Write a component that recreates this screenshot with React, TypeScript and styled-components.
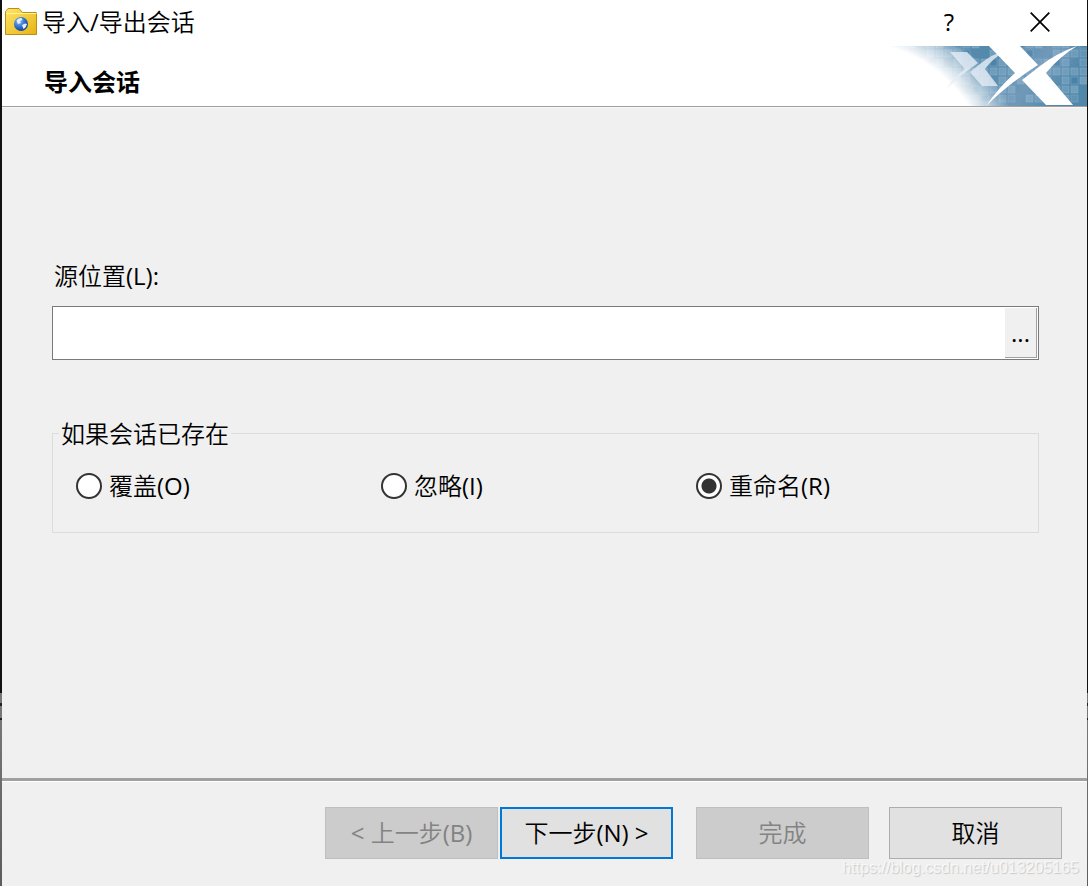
import React, { useState } from "react";
import styled, { createGlobalStyle, css } from "styled-components";

const GlobalStyle = createGlobalStyle`
  * { box-sizing: border-box; }
  body {
    margin: 0;
    color: #000;
    font: 24px/32px "Open Sans", "Noto Sans CJK SC DemiLight", "Noto Sans CJK SC", sans-serif;
  }
  button, input { font: inherit; color: inherit; }
`;

const Backdrop = styled.div`
  display: flex;
  min-height: 100vh;
  padding: 0 1px 0 2px;
  background: linear-gradient(
    #111 78.2%, #777 78.2%, #777 79.4%, #222 79.4%, #222 79.7%, #777 79.7%,
    #777 81%, #222 81%, #222 81.3%, #777 81.3%, #5c5c5c 100%
  );
`;

const Dialog = styled.main`
  display: flex;
  flex: 1;
  flex-direction: column;
  min-width: 0;
  background: #f0f0f0;
`;

const TitleBar = styled.header`
  display: flex;
  align-items: center;
  height: 46px;
  padding: 0 19px 2px 3px;
  background: #fff;
`;

const Title = styled.h1`
  flex: 1;
  margin: 0 0 0 5px;
  font-size: 24px;
  font-weight: 400;
`;

const CaptionButton = styled.button`
  display: flex;
  align-items: center;
  justify-content: center;
  width: 56px;
  height: 44px;
  margin-left: 35px;
  padding: 0;
  border: 0;
  background: none;
`;

const PageHeader = styled.div`
  display: flex;
  align-items: center;
  justify-content: space-between;
  height: 62px;
  padding-left: 42px;
  background: #fff;
  border-bottom: 1px solid #f8f8f8;
  box-shadow: inset 0 -1px #a0a0a0;
`;

const PageTitle = styled.h2`
  margin: 10px 0 0;
  font-family: "Open Sans", "Noto Sans CJK SC", sans-serif;
  font-size: 24px;
  font-weight: 700;
`;

const Banner = styled.svg`
  align-self: flex-start;
  width: 200px;
  height: 60px;
`;

const Content = styled.form`
  display: flex;
  flex: 1;
  flex-direction: column;
  padding: 152px 48px 32px 50px;
`;

const FieldLabel = styled.label`
  margin-left: 2px;
`;

const PathField = styled.div`
  display: flex;
  height: 54px;
  margin: 14px 0 56px;
  padding: 1px;
  background: #fff;
  border: 1px solid #7a7a7a;
`;

const PathInput = styled.input`
  flex: 1;
  min-width: 0;
  padding: 0 8px;
  border: 0;
  outline: 0;
  background: transparent;
`;

const BrowseButton = styled.button`
  width: 32px;
  padding: 0;
  border: 0;
  border-right: 1px solid #a0a0a0;
  border-bottom: 1px solid #a0a0a0;
  background: #f0f0f0;
`;

const Group = styled.fieldset`
  min-width: 0;
  margin: 0;
  padding: 20px 0 30px 6px;
  border: 1px solid #dcdcdc;
`;

const GroupTitle = styled.legend`
  padding: 2px 2px 0;
`;

const Options = styled.div`
  display: grid;
  grid-template-columns: 305fr 315fr 342fr;
  padding-left: 17px;
`;

const Option = styled.label`
  display: flex;
  align-items: center;
  gap: 7px;
`;

const Radio = styled.input`
  flex: none;
  appearance: none;
  width: 26px;
  height: 26px;
  margin: 0;
  border: 2px solid #333;
  border-radius: 50%;
  background: #fff;

  &:checked {
    background: radial-gradient(circle, #333 7px, #fff 8px);
  }
`;

const Footer = styled.footer`
  position: relative;
  display: flex;
  justify-content: flex-end;
  height: 108px;
  padding: 25px 25px 0 0;
  border-top: 3px solid #a0a0a0;
  box-shadow: inset 0 1px #fff;
`;

const ActionButton = styled.button<{ $primary?: boolean; $gap: number }>`
  width: 173px;
  height: 52px;
  margin: 1px 0 0 ${(p) => p.$gap}px;
  padding: 0;
  border: 1px solid #adadad;
  background: #e1e1e1;
  white-space: nowrap;

  ${(p) => p.$primary && css`border: 2px solid #0078d7;`}

  &:disabled {
    color: #838383;
    background: #ccc;
    border-color: #bfbfbf;
  }
`;

const Watermark = styled.span`
  position: absolute;
  right: 8px;
  bottom: 8px;
  color: rgba(255, 255, 255, 0.7);
  font: 16px/20px "Liberation Sans", sans-serif;
  text-shadow: 1px 1px 1px rgba(0, 0, 0, 0.16);
  pointer-events: none;
`;

function FolderIcon() {
  return (
    <svg width="32" height="28" viewBox="0 0 32 28" aria-hidden="true">
      <defs>
        <linearGradient id="folder" x1="0" y1="0" x2="1" y2="1">
          <stop offset="0" stopColor="#ffe565" />
          <stop offset="1" stopColor="#e6b416" />
        </linearGradient>
        <radialGradient id="globe" cx="0.35" cy="0.3" r="0.75">
          <stop offset="0" stopColor="#8dbdf5" />
          <stop offset="0.6" stopColor="#2c6cc8" />
          <stop offset="1" stopColor="#143f91" />
        </radialGradient>
      </defs>
      <path d="M.5 26.500V3.500L3 .5h11l3.500 4h14v22z" fill="url(#folder)" stroke="#b98e12" />
      <path d="M1.500 5.500h30" stroke="#fff2a0" />
      <circle cx="16" cy="16" r="7" fill="url(#globe)" />
      <path d="M11.500 12.500q2-3 5-2.500l1 2-2.500 1 1 2-3 1zM17 17l3-1.500 2 .5-1.500 3.500-2 1.500z" fill="#e2f0ff" />
    </svg>
  );
}

// Cells of the banner's mosaic, each with its own shade
const tiles = Array.from({ length: 24 * 7 }, (_, i) => {
  const col = i % 24;
  const row = Math.floor(i / 24);
  return { col, row, tone: (col * 37 + row * 53 + col * row * 11) % 7 };
}).filter((t) => t.tone > 1);

function BrandBanner() {
  return (
    <Banner viewBox="0 0 200 60" preserveAspectRatio="none" aria-hidden="true">
      <defs>
        <linearGradient id="sky" x1="0" y1="0" x2="1" y2="0.2">
          <stop offset="0" stopColor="#5c8db2" />
          <stop offset="0.55" stopColor="#5389ab" />
          <stop offset="0.8" stopColor="#7099b8" />
          <stop offset="1" stopColor="#5088aa" />
        </linearGradient>
        <radialGradient id="fade" gradientUnits="userSpaceOnUse" cx="-40" cy="140" r="182">
          <stop offset="0.8" stopColor="#fff" />
          <stop offset="0.9" stopColor="#fff" stopOpacity="0.55" />
          <stop offset="1" stopColor="#fff" stopOpacity="0" />
        </radialGradient>
      </defs>
      <rect width="200" height="60" fill="url(#sky)" />
      {tiles.map((t) => (
        <rect
          key={`${t.col}-${t.row}`}
          x={t.col * 9 - 5}
          y={t.row * 9 - 5}
          width="7"
          height="7"
          fill={t.tone === 2 ? "#3f7ba5" : "#a9c4dc"}
          fillOpacity={t.tone === 2 ? 0.4 : t.tone * 0.06}
          stroke="#a9c4dc"
          strokeOpacity="0.3"
        />
      ))}
      <rect width="200" height="60" fill="url(#fade)" />
      <g fill="#e3ecf5" fillOpacity="0.82">
        <path d="M63 6h17l11 11Q76 27 60 42 67 31 78 23z" />
        <path d="M120 4Q106 12 98 23l13 17H95L83 26l10-8Q105 8 120 4z" />
      </g>
      <g fill="#fff">
        <path d="M102 0h31l18 19Q121 38 99 60 112 41 128 27z" />
        <path d="M190 0Q172 11 159 27l27 32h-27L135 34l18-14Q170 7 190 0z" />
      </g>
    </Banner>
  );
}

const choices = [
  { value: "overwrite", text: "覆盖(O)" },
  { value: "ignore", text: "忽略(I)" },
  { value: "rename", text: "重命名(R)" },
];

export default function App() {
  const [choice, setChoice] = useState("rename");
  const [path, setPath] = useState("");

  return (
    <>
      <GlobalStyle />
      <Backdrop>
        <Dialog>
          <TitleBar>
            <FolderIcon />
            <Title>导入/导出会话</Title>
            <CaptionButton type="button" aria-label="帮助">?</CaptionButton>
            <CaptionButton type="button" aria-label="关闭">
              <svg width="20" height="20" viewBox="0 0 20 20" aria-hidden="true">
                <path d="M.7.7l18.600 18.600M19.300.7L.7 19.300" stroke="#000" strokeWidth="1.700" />
              </svg>
            </CaptionButton>
          </TitleBar>
          <PageHeader>
            <PageTitle>导入会话</PageTitle>
            <BrandBanner />
          </PageHeader>
          <Content id="import-form" onSubmit={(e) => e.preventDefault()}>
            <FieldLabel htmlFor="source">源位置(L):</FieldLabel>
            <PathField>
              <PathInput id="source" type="text" value={path} onChange={(e) => setPath(e.target.value)} />
              <BrowseButton type="button">...</BrowseButton>
            </PathField>
            <Group>
              <GroupTitle>如果会话已存在</GroupTitle>
              <Options>
                {choices.map((c) => (
                  <Option key={c.value}>
                    <Radio
                      type="radio"
                      name="conflict"
                      value={c.value}
                      checked={choice === c.value}
                      onChange={() => setChoice(c.value)}
                    />
                    {c.text}
                  </Option>
                ))}
              </Options>
            </Group>
          </Content>
          <Footer>
            <ActionButton type="button" disabled $gap={0}>&lt; 上一步(B)</ActionButton>
            <ActionButton type="submit" form="import-form" $primary $gap={2}>下一步(N) &gt;</ActionButton>
            <ActionButton type="button" disabled $gap={23}>完成</ActionButton>
            <ActionButton type="button" $gap={20}>取消</ActionButton>
            <Watermark>https://blog.csdn.net/u013205165</Watermark>
          </Footer>
        </Dialog>
      </Backdrop>
    </>
  );
}
